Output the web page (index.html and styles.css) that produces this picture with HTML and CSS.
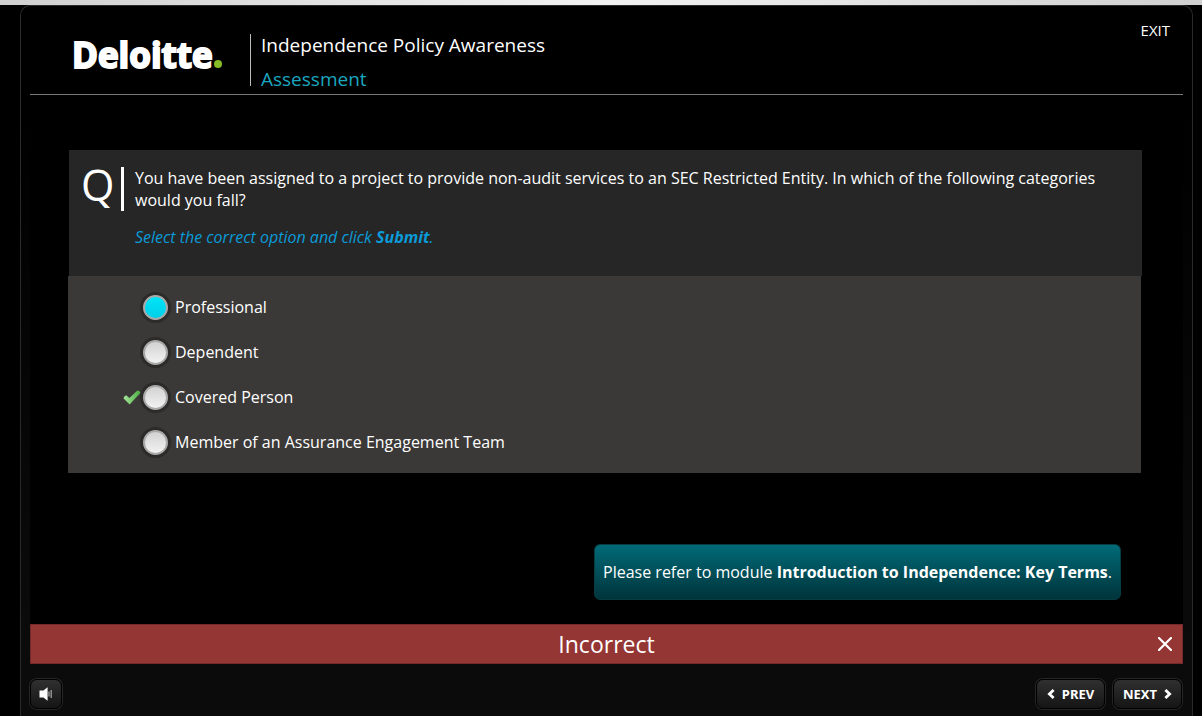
FILE: index.html
```html
<!DOCTYPE html>
<html lang="en">
<head>
<meta charset="utf-8">
<meta name="viewport" content="width=device-width, initial-scale=1">
<title>Independence Policy Awareness</title>
<link rel="stylesheet" href="styles.css">
</head>
<body>
<div class="strip"></div>
<div class="shell">
  <header class="header">
    <div class="logo">Deloitte<span class="logo-dot"></span></div>
    <div class="titles">
      <h1 class="title">Independence Policy Awareness</h1>
      <p class="subtitle">Assessment</p>
    </div>
    <a class="exit" href="#">EXIT</a>
  </header>
  <main class="stage">
    <form class="quiz">
      <div class="question">
        <div class="q-mark">Q</div>
        <div class="q-body">
          <p class="q-text" id="question">You have been assigned to a project to provide non-audit services to an SEC Restricted Entity. In which of the following categories would you fall?</p>
          <p class="q-hint">Select the correct option and click <strong>Submit</strong>.</p>
        </div>
      </div>
      <div class="options" role="radiogroup" aria-labelledby="question">
        <label class="option"><span class="mark"></span><input class="radio" type="radio" name="answer" checked><span>Professional</span></label>
        <label class="option"><span class="mark"></span><input class="radio" type="radio" name="answer"><span>Dependent</span></label>
        <label class="option"><span class="mark">
          <svg width="18" height="15" viewBox="0 0 18 15" aria-hidden="true">
            <defs><linearGradient id="tick" x1="0" y1="0" x2="1" y2="0"><stop offset="0" stop-color="#a6e59c"/><stop offset="1" stop-color="#4caf43"/></linearGradient></defs>
            <path d="M0.4 8.2 Q1.4 6 3.2 5.3 L6.4 8 L14.4 0.4 Q16.8 0.6 17.6 2.8 L6.6 14.4 Z" fill="url(#tick)"/>
          </svg></span><input class="radio" type="radio" name="answer"><span>Covered Person</span></label>
        <label class="option"><span class="mark"></span><input class="radio" type="radio" name="answer"><span>Member of an Assurance Engagement Team</span></label>
      </div>
    </form>
    <p class="refer">Please refer to module <strong>Introduction to Independence: Key Terms</strong>.</p>
    <div class="result" role="status">
      <span class="result-text">Incorrect</span>
      <button class="close" type="button" aria-label="Close">
        <svg width="14" height="14" viewBox="0 0 14 14" aria-hidden="true"><path d="M1 1 L13 13 M13 1 L1 13" stroke="#fff" stroke-width="2.2" fill="none" stroke-linecap="round"/></svg>
      </button>
    </div>
  </main>
  <footer class="footer">
    <button class="btn btn-sound" type="button" aria-label="Sound">
      <svg width="14" height="14" viewBox="0 0 14 14" aria-hidden="true"><path d="M0.5 3.6 H4.4 L8.6 0.3 V13.7 L4.4 10.6 H0.5 Z" fill="#fff"/><path d="M10 4.5 V9.5" stroke="#999" stroke-width="1.4"/><path d="M12.2 3 V11" stroke="#aaa" stroke-width="1.2"/></svg>
    </button>
    <button class="btn" type="button">
      <svg width="8" height="10" viewBox="0 0 8 10" aria-hidden="true"><path d="M6.6 1 L2.4 5 L6.6 9" stroke="#fff" stroke-width="2.8" fill="none"/></svg>PREV
    </button>
    <button class="btn" type="button">NEXT
      <svg width="8" height="10" viewBox="0 0 8 10" aria-hidden="true"><path d="M1.4 1 L5.6 5 L1.4 9" stroke="#fff" stroke-width="2.8" fill="none"/></svg>
    </button>
  </footer>
</div>
</body>
</html>
```

FILE: styles.css
```css
* { box-sizing: border-box; }

body {
  margin: 0;
  min-height: 100vh;
  display: flex;
  flex-direction: column;
  background: #000;
  color: #fff;
  font-family: "Open Sans", "Noto Sans", sans-serif;
  font-size: 16px;
  line-height: 22px;
}

h1, p { margin: 0; font-weight: 400; }

.strip {
  height: 5px;
  background: linear-gradient(90deg, #d0d0d0, #f2f2f2 50%, #d0d0d0);
}

.shell {
  flex: 1;
  display: flex;
  flex-direction: column;
  margin: 0 9px 0 20px;
  padding: 0 9px;
  border: 1px solid #2a2a2a;
  border-bottom: 0;
  border-radius: 10px 10px 0 0;
  background: linear-gradient(#000 15%, #0b0b0b 90%);
}

.header {
  display: flex;
  align-items: flex-start;
  height: 89px;
  padding: 0 13px 0 42px;
  border-bottom: 1px solid #777;
}

.logo {
  display: flex;
  align-items: baseline;
  gap: 1px;
  width: 178px;
  padding-top: 25px;
  font-size: 35px;
  font-weight: 700;
  line-height: 48px;
  -webkit-text-stroke: 2px #fff;
}

.logo-dot {
  width: 8px;
  height: 8px;
  border-radius: 50%;
  background: #86bc25;
}

.titles {
  flex: 1;
  margin-top: 28px;
  padding-left: 10px;
  border-left: 1px solid #bbb;
  height: 52px;
  font-size: 19px;
}

.title {
  font-size: inherit;
  font-weight: 400;
  line-height: 22px;
}

.subtitle {
  margin-top: 12px;
  color: #1ba6bf;
}

.exit {
  margin-top: 13px;
  color: #fff;
  font-size: 15px;
  text-decoration: none;
}

.stage {
  display: flex;
  flex-direction: column;
  padding-top: 55px;
  background: #000;
}

.quiz { margin: 0 42px 0 38px; }

.question {
  display: flex;
  min-height: 126px;
  margin: 0 -1px 0 1px;
  padding: 17px 40px 0 12px;
  background: #262626;
}

.q-mark {
  width: 43px;
  height: 44px;
  border-right: 3px solid #fff;
  font-size: 43px;
  line-height: 36px;
}

.q-body { flex: 1; padding-left: 11px; }

.q-hint {
  margin-top: 15px;
  color: #0a9bd8;
  font-style: italic;
}

.options {
  display: flex;
  flex-direction: column;
  gap: 15px;
  padding: 16px 0 16px 54px;
  background: #3b3937;
}

.option {
  display: flex;
  align-items: center;
  height: 30px;
}

.mark { display: flex; width: 20px; padding-left: 1px; }

.mark svg { flex: none; }

.radio {
  appearance: none;
  width: 25px;
  height: 25px;
  margin: 0 7px 0 1px;
  border: 2px solid #a9a9a9;
  border-radius: 50%;
  background: linear-gradient(#d2d2d2, #f2f2f2);
  box-shadow: 0 0 0 3px #2c2b2a;
}

.radio:checked { background: linear-gradient(#00e4f8, #00cfe8); }

.refer {
  align-self: flex-end;
  margin: 71px 62px 24px 0;
  padding: 16px 8px;
  border: 1px solid #063c42;
  border-radius: 6px;
  background: linear-gradient(#006a77, #00343b);
}

.result {
  display: flex;
  align-items: center;
  height: 40px;
  padding: 0 10px;
  border: 1px solid #74292a;
  background: #943634;
}

.result-text {
  flex: 1;
  padding-left: 14px;
  font-size: 23px;
  text-align: center;
}

.close {
  display: flex;
  padding: 0;
  border: 0;
  background: none;
}

.footer {
  display: flex;
  gap: 8px;
  padding: 15px 1px 4px 0;
}

.btn {
  display: flex;
  align-items: center;
  justify-content: center;
  gap: 7px;
  width: 69px;
  height: 30px;
  padding: 0;
  border: 1px solid #000;
  border-radius: 7px;
  background: linear-gradient(#303030, #151515);
  box-shadow: 0 0 0 1px #262626;
  color: #fff;
  font: 700 13px/18px "Noto Sans", "Open Sans", sans-serif;
}

.btn-sound { width: 32px; margin-right: auto; }
```
